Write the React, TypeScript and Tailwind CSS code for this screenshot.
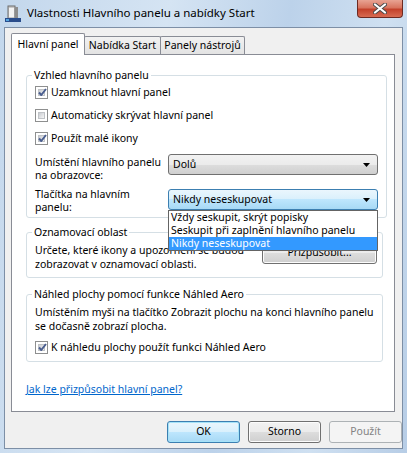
import { ReactNode } from 'react';

const FONT = "font-['Noto_Sans',sans-serif] text-[10.5px] text-black whitespace-nowrap";

function CheckBox({ checked, children }: { checked: boolean; children: ReactNode }) {
  return (
    <div className="flex h-[15px] items-center gap-[3px]">
      <span className="relative flex h-[13px] w-[13px] shrink-0 border border-[#8e8f8f] bg-white p-[2px]">
        <span className="h-full w-full border border-[#c0c3c7] bg-gradient-to-br from-[#c9ccd1] to-[#f6f6f6]" />
        {checked && (
          <svg className="absolute left-[1px] top-[0px]" width="11" height="11" viewBox="0 0 11 11">
            <path d="M2 5.5 L4.3 8 L9 2" fill="none" stroke="#4a5e8f" strokeWidth="2" strokeLinejoin="round" />
          </svg>
        )}
      </span>
      <span>{children}</span>
    </div>
  );
}

function Arrow() {
  return (
    <svg width="7" height="4" viewBox="0 0 7 4">
      <path d="M0 0 H7 L3.5 4 Z" fill="#000" />
    </svg>
  );
}

function Combo({ value, hot }: { value: string; hot?: boolean }) {
  return (
    <div
      className={
        hot
          ? 'flex h-[21px] w-[210px] items-center justify-between rounded-[3px] border border-[#3c7fb1] bg-[linear-gradient(#eaf6fd_0%,#d9f0fc_50%,#bee6fd_50%,#a7d9f5_100%)] pl-[4px] pr-[7px]'
          : 'flex h-[21px] w-[210px] items-center justify-between rounded-[3px] border border-[#707070] bg-[linear-gradient(#f2f2f2_0%,#ebebeb_50%,#dddddd_50%,#cfcfcf_100%)] pl-[4px] pr-[7px]'
      }
    >
      <span>{value}</span>
      <Arrow />
    </div>
  );
}

function Button({ children, variant }: { children: ReactNode; variant?: 'default' | 'disabled' }) {
  if (variant === 'default') {
    return (
      <div className="flex h-[22px] w-[73px] items-center justify-center rounded-[3px] border border-[#3c7fb1] bg-[linear-gradient(#eaf6fd_0%,#d9f0fc_50%,#bee6fd_50%,#a7d9f5_100%)] shadow-[inset_0_0_0_1px_#a5e3f8]">
        {children}
      </div>
    );
  }
  if (variant === 'disabled') {
    return (
      <div className="flex h-[22px] w-[73px] items-center justify-center rounded-[3px] border border-[#adb2b5] bg-[#f4f4f4] text-[#838383]">
        {children}
      </div>
    );
  }
  return (
    <div className="flex h-[22px] w-[73px] items-center justify-center rounded-[3px] border border-[#707070] bg-[linear-gradient(#f2f2f2_0%,#ebebeb_50%,#dddddd_50%,#cfcfcf_100%)] shadow-[inset_0_0_0_1px_#fcfcfc]">
      {children}
    </div>
  );
}

function Group({ title, children, className }: { title: string; children: ReactNode; className?: string }) {
  return (
    <fieldset className={'rounded-[3px] border border-[#d5dfe5] px-[8px] ' + (className ?? '')}>
      <legend className="-ml-[3px] px-[2px] leading-[14px]">{title}</legend>
      {children}
    </fieldset>
  );
}

function WindowIcon() {
  return (
    <svg width="16" height="17" viewBox="0 0 16 17">
      <rect x="3" y="1" width="7" height="14" fill="#c9c9c9" stroke="#6d6d6d" />
      <rect x="10" y="2" width="3" height="12" fill="#8d8d8d" />
      <rect x="4" y="3" width="5" height="9" fill="#f3f3f3" />
      <rect x="0" y="13" width="16" height="4" fill="#2a4d8c" />
      <rect x="1" y="14" width="3" height="2" fill="#53a4de" />
    </svg>
  );
}

export default function App() {
  return (
    <div className={FONT + ' flex h-[453px] w-[407px] flex-col bg-[linear-gradient(100deg,#c3d7ec_0%,#d5e4f3_35%,#bcd2ea_60%,#cfe0f1_80%,#b7cde6_100%)]'}>
      {/* title bar */}
      <div className="flex h-[27px] shrink-0 items-start">
        <div className="ml-[5px] mt-[5px]">
          <WindowIcon />
        </div>
        <div className="ml-[6px] mt-[4px] text-[11.5px] leading-[18px]">Vlastnosti Hlavního panelu a nabídky Start</div>
        <div className="ml-auto mr-[4px] flex h-[18px] w-[46px] items-center justify-center rounded-b-[4px] border border-t-0 border-[#6d2a22] bg-[linear-gradient(#e8a393_0%,#d8745f_45%,#c3412b_55%,#d86b52_100%)]">
          <svg width="14" height="11" viewBox="0 0 14 11">
            <path d="M2 1.5 L12 9.5 M12 1.5 L2 9.5" stroke="#4a4a4a" strokeWidth="4" strokeLinecap="round" />
            <path d="M2 1.5 L12 9.5 M12 1.5 L2 9.5" stroke="#ffffff" strokeWidth="2.2" strokeLinecap="round" />
          </svg>
        </div>
      </div>

      {/* client area */}
      <div className="mx-[4px] flex h-[422px] flex-col border border-[#7d8fa6] bg-[#f0f0f0] pl-[6px] pt-[5px]">
        {/* tabs */}
        <div className="flex h-[21px] items-end">
          <div className="relative z-10 -mb-px flex h-[22px] w-[74px] items-center justify-center rounded-t-[2px] border border-b-0 border-[#898c95] bg-white">
            Hlavní panel
          </div>
          <div className="-ml-px flex h-[18px] w-[77px] items-center justify-center rounded-t-[2px] border border-b-0 border-[#898c95] bg-[linear-gradient(#f2f2f2,#e3e3e3)]">
            Nabídka Start
          </div>
          <div className="-ml-px flex h-[18px] w-[85px] items-center justify-center rounded-t-[2px] border border-b-0 border-[#898c95] bg-[linear-gradient(#f2f2f2,#e3e3e3)]">
            Panely nástrojů
          </div>
        </div>

        {/* tab page */}
        <div className="flex h-[358px] w-[384px] flex-col border border-[#898c95] bg-white pl-[14px] pr-[11px] pt-[13px]">
          <Group title="Vzhled hlavního panelu" className="pb-[3px]">
            <div className="mt-[3px] flex flex-col gap-[8px]">
              <CheckBox checked>Uzamknout hlavní panel</CheckBox>
              <CheckBox checked={false}>Automaticky skrývat hlavní panel</CheckBox>
              <CheckBox checked>Použít malé ikony</CheckBox>
            </div>
            <div className="mt-[8px] flex items-start">
              <div className="w-[133px] pt-[2px] leading-[13px]">
                Umístění hlavního panelu
                <br />
                na obrazovce:
              </div>
              <Combo value="Dolů" />
            </div>
            <div className="mt-[6px] flex items-start">
              <div className="w-[133px] leading-[13px]">
                Tlačítka na hlavním
                <br />
                panelu:
              </div>
              <div className="relative mt-[1px]">
                <Combo value="Nikdy neseskupovat" hot />
                <div className="absolute left-0 top-full z-20 w-[210px] border border-[#646464] bg-white leading-[13px]">
                  <div className="px-[2px]">Vždy seskupit, skrýt popisky</div>
                  <div className="px-[2px]">Seskupit při zaplnění hlavního panelu</div>
                  <div className="bg-[#3399ff] px-[2px] text-white">Nikdy neseskupovat</div>
                </div>
              </div>
            </div>
          </Group>

          <Group title="Oznamovací oblast" className="mt-[7px] pb-[6px]">
            <div className="mt-[4px] flex items-start justify-between">
              <div className="leading-[14px]">
                Určete, které ikony a upozornění se budou
                <br />
                zobrazovat v oznamovací oblasti.
              </div>
              <div className="-mt-[1px] mr-[-3px]">
                <div className="flex h-[22px] w-[115px] items-center justify-center rounded-[3px] border border-[#707070] bg-[linear-gradient(#f2f2f2_0%,#ebebeb_50%,#dddddd_50%,#cfcfcf_100%)] shadow-[inset_0_0_0_1px_#fcfcfc]">
                  Přizpůsobit...
                </div>
              </div>
            </div>
          </Group>

          <Group title="Náhled plochy pomocí funkce Náhled Aero" className="mt-[9px] pb-[6px]">
            <div className="mt-[4px] leading-[14px]">
              Umístěním myši na tlačítko Zobrazit plochu na konci hlavního panelu
              <br />
              se dočasně zobrazí plocha.
            </div>
            <div className="mt-[7px]">
              <CheckBox checked>K náhledu plochy použít funkci Náhled Aero</CheckBox>
            </div>
          </Group>

          <div className="mt-[20px] leading-[14px]">
            <span className="text-[#0066cc] underline">Jak lze přizpůsobit hlavní panel?</span>
          </div>
        </div>

        {/* buttons */}
        <div className="mt-[9px] flex w-[391px] justify-end gap-[8px]">
          <Button variant="default">OK</Button>
          <Button>Storno</Button>
          <Button variant="disabled">Použít</Button>
        </div>
      </div>
    </div>
  );
}
